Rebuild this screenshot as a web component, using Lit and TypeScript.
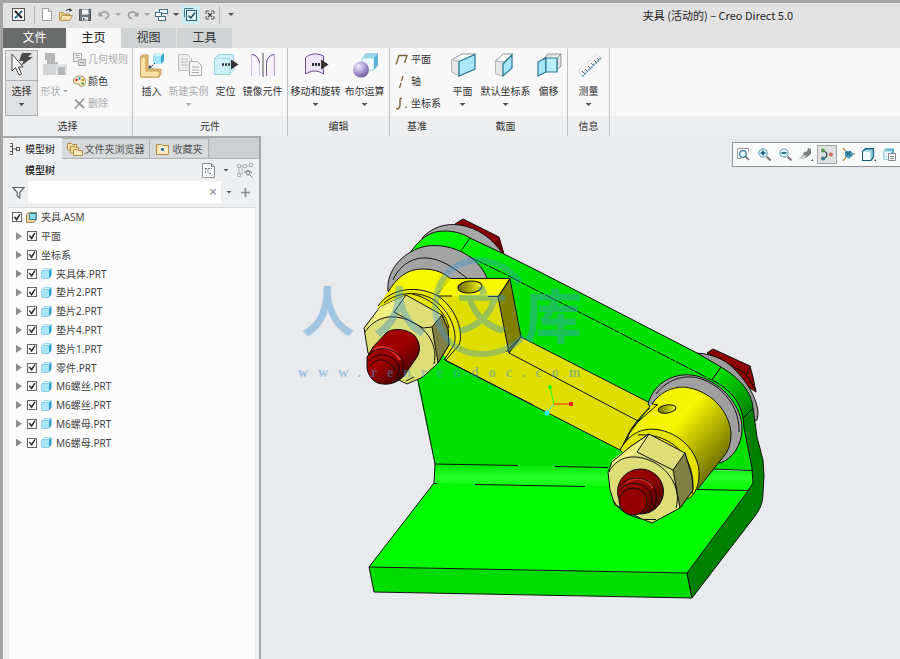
import { LitElement, html, svg, css, nothing } from "lit";
import { customElement, property } from "lit/decorators.js";

/* ---------- icons ---------- */

const icons: Record<string, [number, number, unknown]> = {
  app: [13, 13, svg`<rect x=".5" y=".5" width="12" height="12" fill="#f4f4f4" stroke="#555"/><path d="M3 3L10 10" stroke="#222" stroke-width="2"/><path d="M10 3L7.300 5.700M5.700 7.300L3 10" stroke="#2a6a86" stroke-width="1.800"/>`],
  doc: [12, 13, svg`<path d="M1.500.5h6l3 3v9h-9z" fill="#fff" stroke="#9aa0a4"/><path d="M7.500.5v3h3" fill="#dfe4e6" stroke="#9aa0a4"/>`],
  open: [14, 13, svg`<path d="M.5 12V4.500h4l1 1.500h5V12z" fill="#e8c88c" stroke="#b99653"/><path d="M.8 12.300L3 7.500h10.500l-2.700 4.800z" fill="#f8e2ae" stroke="#b99653"/><path d="M7 3c1-2 3-2 4.500-1" fill="none" stroke="#333"/><path d="M10.500 0l3 2.500-3.500 1z" fill="#333"/>`],
  save: [12, 12, svg`<path d="M.5.5h11v11h-11z" fill="#70777c" stroke="#4c5256"/><path d="M3 .5h6.500v5H3z" fill="#f2f4f5"/><path d="M3 8h6v3.500H3z" fill="#d9dcde"/><path d="M4 9h1.500v2H4z" fill="#555"/>`],
  undo: [12, 10, svg`<path d="M2 4.500C5 0 11 2 10.500 5.500 10 8 8 8 7 9" fill="none" stroke="#999da0" stroke-width="1.500"/><path d="M.5 1.500v5h5z" fill="#999da0"/>`],
  redo: [12, 10, svg`<path d="M10 4.500C7 0 1 2 1.500 5.500 2 8 4 8 5 9" fill="none" stroke="#999da0" stroke-width="1.500"/><path d="M11.500 1.500v5h-5z" fill="#999da0"/>`],
  windows: [13, 12, svg`<rect x="4.500" y=".5" width="8" height="4" fill="#f0f5f7" stroke="#3e7186"/><rect x=".5" y="3.500" width="6" height="4" fill="#fff" stroke="#3e7186"/><rect x="3.500" y="7.500" width="7" height="4" fill="#fff" stroke="#3e7186"/>`],
  regen: [13, 13, svg`<path d="M.5 9.500v-9h9" fill="none" stroke="#4d7e90"/><rect x="2.500" y="2.500" width="10" height="10" fill="#e9f8fd" stroke="#28627a"/><path d="M4.500 7.500l2.300 2.500L11 4.500" fill="none" stroke="#1f4c60" stroke-width="1.500"/>`],
  closewin: [10, 10, svg`<path d="M1 4V1h3M6 1h3v3M9 6v3H6M4 9H1V6" fill="none" stroke="#555"/><path d="M3 3l4 4M7 3L3 7" stroke="#444" stroke-width="1.200"/>`],
  select: [26, 26, svg`<path d="M13 1h10l-4 4h5L12 14l2.500-5H10z" fill="#4a4a4a"/><path d="M3 2v17l3.500-3.500L10 23l2.500-1-3-7H14z" fill="#fff" stroke="#444"/>`],
  shape: [26, 26, svg`<path d="M3 1h10v9h3v5H5V8H3z" fill="#b6b8ba"/><path d="M1 12h13v11H1z" fill="#d2d4d6"/><path d="M14 12h11v11H14z" fill="#e2e3e4"/><path d="M16 15h7v8h-7z" fill="#b6b8ba"/>`],
  rule: [13, 13, svg`<path d="M.5.5h8v8h-8zM2.500 2.500h4M2.500 4.500h4" fill="#f2f2f2" stroke="#a4a6a8"/><path d="M5.500 6.500h7v6h-7z" fill="#dcdddd" stroke="#a4a6a8"/><path d="M7 9.500h4" stroke="#999"/>`],
  color: [13, 13, svg`<path d="M6.500 1C10 1 12.500 3 12.500 6.500S10 12 7.500 11.500C6 11 7.500 9.500 6 9 4 9 .5 9.500.5 6S3.500 1 6.500 1z" fill="#f8edc6" stroke="#a08a4a"/><circle cx="3.500" cy="5" r="1.300" fill="#d33"/><circle cx="6.500" cy="3.500" r="1.200" fill="#39b"/><circle cx="9.800" cy="5" r="1.200" fill="#c80"/><circle cx="9.500" cy="8.500" r="1.200" fill="#593"/>`],
  del: [13, 13, svg`<path d="M2 2.500L11 11M11 1.500L2 11.500" stroke="#949698" stroke-width="1.800"/>`],
  insert: [26, 26, svg`<path d="M1.500 5l2-2H9v14h13v5l-2 3H1.500z" fill="#edc479" stroke="#c09a55"/><path d="M1.500 5H7v14h13v6H1.500z" fill="#fbe3a8" stroke="#c09a55"/><path d="M14 4l3-3h8v8l-3 3h-8z" fill="#3ba6d2"/><path d="M14 4h8v8h-8z" fill="#a3e3fa"/><path d="M14 4l3-3h8l-3 3z" fill="#d4f3fd"/><path d="M16 11l-4 4" stroke="#333" stroke-dasharray="2 1"/><circle cx="11" cy="15" r="1.500" fill="#345"/>`],
  newinst: [26, 26, svg`<path d="M2.500 2.500h9l4 4v12h-13z" fill="#ececec" stroke="#bcbec0"/><path d="M5 7h7M5 10h7M5 13h7" stroke="#bcbec0"/><path d="M13.500 9.500h8l4 4v10h-12z" fill="#f5f5f5" stroke="#a8aaac"/><path d="M16 15h7M16 18h7M16 20.500h7" stroke="#a8aaac"/>`],
  place: [26, 26, svg`<path d="M1.500 6.500l4-4h15v15l-4 5h-15z" fill="#cdf0fa" stroke="#9ccfde"/><path d="M1.500 6.500h15v16" fill="none" stroke="#a6dcea"/><path d="M9 12.500h9" stroke="#333" stroke-width="2.500" stroke-dasharray="2 1"/><path d="M18 7.500l7.500 5-7.500 5z" fill="#333"/>`],
  mirror: [26, 26, svg`<path d="M13 1v24" stroke="#a2a4a6" stroke-width="2"/><path d="M1.500 24V2.500C6 3 9 6 9.500 11v13" fill="#f7f4fb" stroke="#cabfd6"/><path d="M2 2.500C6 3 9 6 9.500 11" fill="none" stroke="#6e4b8e"/><path d="M24.500 24V2.500C20 3 17 6 16.500 11v13" fill="#f4eff9" stroke="#b8a8c8"/><path d="M24 2.500C20 3 17 6 16.500 11v13" fill="none" stroke="#7c5a9c"/>`],
  move: [26, 26, svg`<path d="M2.500 5.500C8 1 14 1 20.500 4v18c-6-4-12-4-18 0z" fill="#eee5f8" stroke="#6e4b96"/><path d="M9 12.500h9" stroke="#333" stroke-width="3" stroke-dasharray="2 1"/><path d="M18 7.500l7.500 5-7.500 5z" fill="#333"/>`],
  bool: [26, 26, svg`<path d="M10 6l4-5h12v12l-4 5H10z" fill="#9bd6e6"/><path d="M10 6h12v12H10z" fill="#f2fbfe" stroke="#a9dbe8"/><path d="M22 6l4-5v12l-4 5z" fill="#58b4d2"/><circle cx="9" cy="17.500" r="8" fill="url(#orb)"/>`],
  plane: [13, 13, svg`<path d="M1 11.500L4 2.500h8L9.500 10" fill="none" stroke="#7b6239" stroke-width="1.300"/>`],
  axis: [13, 13, svg`<path d="M8 1L6.500 6M6 8l-1.500 5" stroke="#7b6239" stroke-width="1.300"/>`],
  csys: [13, 13, svg`<path d="M1 12c4 0 4-2 4-5.500V1.500M5 1.500h2M11 9.500v1.500" fill="none" stroke="#7b6239" stroke-width="1.400"/>`],
  secplane: [26, 26, svg`<path d="M1.500 8L12 2h13L17 7" fill="#fff" stroke="#8f9396"/><path d="M1.500 8L9 9.500V24l-7.500-4z" fill="#e4e6e8" stroke="#b4b8ba"/><path d="M9 9.500L25 2.500V17L9 24z" fill="#aae7fc" stroke="#26768f" stroke-width="1.200"/>`],
  seccsys: [26, 26, svg`<path d="M2.500 9l8-7h9L11 10z" fill="#fff" stroke="#8f9396"/><path d="M2.500 9l7.500 1v14l-7.500-2z" fill="#e4e6e8" stroke="#b4b8ba"/><path d="M10 12l9-9v13l-9 8z" fill="#aae7fc" stroke="#26768f" stroke-width="1.200"/>`],
  offset: [26, 26, svg`<path d="M6 8l6-6h13l-4 4v12l4-4V2" fill="#dfe2e4" stroke="#8f9396"/><path d="M2 10l8-4v14l-8 4z" fill="#aae7fc" stroke="#26768f" stroke-width="1.200"/><path d="M10 6h11v14H10z" fill="#b8edfd" stroke="#26768f" stroke-width="1.200"/>`],
  measure: [26, 26, svg`<path d="M1.500 19L20 1.500l5 4.500L6.500 24.500z" fill="#f4f5f6" stroke="#d6dadc"/><path d="M6.500 24.500L25 6" stroke="#5c98ab" stroke-width="1.500" stroke-dasharray="2 1"/><path d="M6 19l3 3M9 17l2 2M12 14l3 3M15 11l2 2M18 8l3 3M21 6l2 2" stroke="#5a6266"/>`],
  tree: [12, 14, svg`<path d="M1 1.500h2.500v3H1M1 9.500h2.500v3H1M3.500 3v8M3.500 7H7" fill="none" stroke="#555"/><rect x="7.500" y="5.500" width="3" height="3" fill="none" stroke="#555"/>`],
  folders: [16, 14, svg`<path d="M.5 8V1.500h4l1 1h4V8z" fill="#f6dfa4" stroke="#b08c48"/><path d="M3.500 11V4.500h4l1 1h3V11z" fill="#f6dfa4" stroke="#b08c48"/><path d="M6.500 13.500V7.500h4l1 1h4v5z" fill="#fbe9ba" stroke="#b08c48"/>`],
  fav: [13, 12, svg`<path d="M.5 11.500v-10h5l1 1h6v9z" fill="#fbe9ba" stroke="#b08c48"/><path d="M6.500 3.500l3 3-3 3-3-3z" fill="#fff"/><circle cx="6.500" cy="6.500" r="1.700" fill="#2f6f92"/>`],
  settings: [13, 15, svg`<path d="M.5.5h9l3 3v11h-12z" fill="#fff" stroke="#8c9498"/><path d="M9.500.5v3h3" fill="none" stroke="#8c9498"/><path d="M3 5.500h7M3.500 5v6M6 5.500v5h4" fill="none" stroke="#6b8490" stroke-dasharray="2 1"/>`],
  treeshow: [16, 15, svg`<path d="M.5 1.500h3v3h-3zM.5 10.500h3v3h-3zM6.500 1.500h3v3h-3zM12.500.5h3v3h-3zM2 5v5M4 3h2M10 3h2M5 3v9" fill="none" stroke="#b0b3b5"/><circle cx="11" cy="10" r="2" fill="none" stroke="#77797b"/><path d="M13 12l2.500 2.500M7 10c2-3 6-3 8 0" fill="none" stroke="#77797b"/>`],
  filter: [13, 13, svg`<path d="M1 1.500h11L7.800 6.500v5.500l-2.600-2V6.500z" fill="#fafbfb" stroke="#5a6670" stroke-width="1.200"/>`],
  plus: [9, 9, svg`<path d="M4.500 0v9M0 4.500h9" stroke="#8b8e90" stroke-width="1.700"/>`],
  asm: [11, 11, svg`<path d="M.5 2.500l2-2h8v7l-3 3h-7z" fill="#f1d79a" stroke="#9c8c5c"/><path d="M3.500 1.500h6.500v6H3.500z" fill="#93dcf5" stroke="#2e7f9f"/>`],
  part: [11, 11, svg`<path d="M.5 3l2.500-2.500h7.500v7L8 10.500H.5z" fill="#2f9fd0"/><path d="M1 3h7v7H1z" fill="#a9e6fb"/><path d="M1 2.600L3 .8h7L8 2.600z" fill="#d8f5ff"/>`],
  fit: [13, 13, svg`<path d="M.5.5h11M.5.500v10h4M11.500.500v3" fill="none" stroke="#9a9da0"/><circle cx="6" cy="6" r="3.300" fill="#eefafd" stroke="#2b7d97" stroke-width="1.200"/><path d="M8.500 8.500l3.500 3.500" stroke="#777" stroke-width="1.700"/>`],
  zin: [13, 13, svg`<circle cx="5" cy="5" r="4.200" fill="#dff4fb" stroke="#5a9cb2"/><path d="M2.500 5h5M5 2.500v5" stroke="#155a75" stroke-width="1.700"/><path d="M8.500 8.500l4 4" stroke="#777" stroke-width="2"/>`],
  zout: [13, 13, svg`<circle cx="5" cy="5" r="4.200" fill="#dff4fb" stroke="#5a9cb2"/><path d="M2.500 5h5" stroke="#155a75" stroke-width="1.700"/><path d="M8.500 8.500l4 4" stroke="#777" stroke-width="2"/>`],
  repaint: [15, 13, svg`<path d="M9 0l3 1v5L7 10 0 11l4-4 1-3 3-.5z" fill="#7d8083"/><path d="M0 11l5-4 3 1-4 3z" fill="#cfd1d3"/><path d="M12 13h2v-2z" fill="#333"/>`],
  datum: [14, 13, svg`<path d="M4 3c4 2 4 5 0 8" fill="none" stroke="#33444c" stroke-width="1.300"/><circle cx="3" cy="2.500" r="2" fill="#5d9a4c"/><circle cx="11" cy="6.500" r="2" fill="#cf6a5a"/><circle cx="3" cy="10.500" r="2" fill="#34769a"/>`],
  spin: [13, 13, svg`<path d="M1 0l3 4v5l-3 4M3 6h10" fill="none" stroke="#b4792e" stroke-width="1.200"/><path d="M3 3l5 0 4 3-5 5-4-3z" fill="#4c9fc0"/><path d="M4 4l6 4M4 8l5-5" stroke="#17546c"/>`],
  shade: [15, 13, svg`<path d="M.6 3.500L3.500.6h8v8.500L9 12.400H.6z" fill="#8cc8da" stroke="#155a75" stroke-width="1.200"/><path d="M1 3.500h7.500v8.500H1z" fill="#f6fdff"/><path d="M12 13h2v-2z" fill="#333"/>`],
  views: [14, 13, svg`<path d="M.5 3L3 .5h8v9L9 11.500H.5z" fill="#58b3d2"/><path d="M1 3h7.500v8.500H1z" fill="#e4f7fd" stroke="#98cfe0"/><path d="M5.500 5.500h7v7h-7z" fill="#fff" stroke="#888"/><path d="M7 8.500h4M7 10.500h4" stroke="#777"/>`],
};

const icon = (name: string) => {
  const [w, h, body] = icons[name];
  return html`<svg width=${w} height=${h} viewBox="0 0 ${w} ${h}" aria-hidden="true">${
    name === "bool"
      ? svg`<defs><radialGradient id="orb" cx=".35" cy=".3" r=".8"><stop offset="0" stop-color="#f3effb"/><stop offset=".6" stop-color="#9d8cc8"/><stop offset="1" stop-color="#5d4a92"/></radialGradient></defs>`
      : nothing
  }${body}</svg>`;
};

const base = css`
  * { box-sizing: border-box; }
  button {
    border: 0;
    padding: 0;
    margin: 0;
    background: none;
    color: inherit;
    font: inherit;
    line-height: inherit;
    white-space: nowrap;
  }
  svg { display: block; flex: none; }
  .arrow {
    flex: none;
    width: 6px;
    height: 3px;
    background: #505254;
    clip-path: polygon(0 0, 100% 0, 50% 100%);
  }
`;

/* ---------- ribbon ---------- */

interface Tool { icon: string; label: string; menu?: boolean; off?: boolean; size?: string; active?: boolean; }
interface Group { label: string; cls: string; large: Tool[]; small?: Tool[]; }

const groups: Group[] = [
  {
    label: "选择", cls: "first",
    large: [
      { icon: "select", label: "选择", menu: true, active: true, size: "narrow" },
      { icon: "shape", label: "形状", off: true, size: "inline" },
    ],
    small: [
      { icon: "rule", label: "几何规则", off: true },
      { icon: "color", label: "颜色" },
      { icon: "del", label: "删除", off: true },
    ],
  },
  {
    label: "元件", cls: "parts",
    large: [
      { icon: "insert", label: "插入" },
      { icon: "newinst", label: "新建实例", menu: true, off: true },
      { icon: "place", label: "定位" },
      { icon: "mirror", label: "镜像元件" },
    ],
  },
  {
    label: "编辑", cls: "edit",
    large: [
      { icon: "move", label: "移动和旋转", menu: true, size: "wide" },
      { icon: "bool", label: "布尔运算", menu: true, size: "wide" },
    ],
  },
  {
    label: "基准", cls: "open", large: [],
    small: [
      { icon: "plane", label: "平面" },
      { icon: "axis", label: "轴" },
      { icon: "csys", label: "坐标系" },
    ],
  },
  {
    label: "截面", cls: "",
    large: [
      { icon: "secplane", label: "平面", menu: true },
      { icon: "seccsys", label: "默认坐标系", menu: true, size: "wide" },
      { icon: "offset", label: "偏移" },
    ],
  },
  { label: "信息", cls: "", large: [{ icon: "measure", label: "测量", menu: true, size: "info" }] },
];

@customElement("cad-ribbon")
class CadRibbon extends LitElement {
  static styles = [base, css`
    :host { display: block; }
    .quick { display: flex; align-items: center; height: 25px; padding-bottom: 2px; }
    .quick button { display: flex; align-items: center; justify-content: center; width: 19px; height: 19px; }
    .quick .logo { width: 31px; }
    .quick .drop { width: 10px; }
    .quick .last { width: 18px; }
    .quick .on { background: #cdeaf5; }
    .quick .faint .arrow { background: #a4a6a8; }
    .sep { width: 1px; height: 18px; background: #b4b6b8; margin-right: 2px; }
    h1 {
      margin: 0;
      flex: 1;
      text-align: center;
      font: 400 11px/14px "Noto Sans CJK SC", sans-serif;
      color: #222;
      padding-left: 296px;
      white-space: nowrap;
    }
    .tabs { display: flex; height: 20px; font-size: 12px; line-height: 20px; }
    .tabs button { width: 55px; background: #d0d3d4; color: #333; margin-right: 1px; }
    .tabs .file { width: 63px; background: #6a6b6b; color: #fff; margin: 0; }
    .tabs .home { background: #f8f8f8; color: #111; margin: 0; }
    .ribbon { display: flex; background: linear-gradient(#f8f8f8 68px, #eeeff0 68px); height: 88px; }
    .group { display: flex; flex-direction: column; border-right: 1px solid #bfc1c3; }
    .group.open { border-right: 0; }
    .tools { display: flex; height: 68px; }
    .first .tools { padding-left: 2px; }
    .parts .tools { padding-right: 6px; }
    .edit .tools { padding-left: 3px; }
    .caption { height: 20px; line-height: 20px; text-align: center; color: #333; }
    .large {
      display: flex;
      flex-direction: column;
      align-items: center;
      width: 37px;
      height: 66px;
      margin-top: 2px;
      padding-top: 2px;
      color: #333;
    }
    .large span { height: 22px; line-height: 20px; margin-top: 3px; padding-bottom: 2px; display: flex; align-items: center; gap: 2px; }
    .narrow { width: 33px; }
    .inline { width: 33px; }
    .wide { width: 49px; }
    .info { width: 41px; }
    .active { background: linear-gradient(#e2e4e5 30px, #aeb0b2 30px, #aeb0b2 31px, #dfe1e2 31px); outline: 1px solid #aeb0b2; outline-offset: -1px; }
    .small { display: flex; flex-direction: column; padding: 0 4px 0 2px; color: #333; }
    .small button { display: flex; align-items: center; height: 22px; gap: 2px; width: 55px; }
    .open .small { padding: 0 2px 0 5px; }
    .open .small button { width: 47px; gap: 3px; }
    .off { color: #a8aaac; }
    .off .arrow { background: #a8aaac; }
  `];

  private tool(t: Tool) {
    return html`<button class="large ${t.size ?? ""} ${t.off ? "off" : ""} ${t.active ? "active" : ""}">
      ${icon(t.icon)}
      <span>${t.label}${t.size === "inline" ? html`<i class="arrow"></i>` : nothing}</span>
      ${t.menu ? html`<i class="arrow"></i>` : nothing}
    </button>`;
  }

  render() {
    const q = (name: string, label: string, cls = "") =>
      html`<button class=${cls} aria-label=${label}>${icon(name)}</button>`;
    const drop = (label: string, cls = "") =>
      html`<button class="drop ${cls}" aria-label=${label}><i class="arrow"></i></button>`;
    return html`
      <div class="quick">
        ${q("app", "窗口", "logo")}<div class="sep"></div>
        ${q("doc", "新建")}${q("open", "打开")}${q("save", "保存")}
        ${q("undo", "撤消")}${drop("撤消列表", "faint")}
        ${q("redo", "重做")}${drop("重做列表", "faint")}
        ${q("windows", "窗口切换")}${drop("窗口列表")}
        ${q("regen", "重新生成", "on")}${q("closewin", "关闭")}
        <div class="sep"></div>${drop("自定义", "last")}
        <h1>夹具 (活动的) – Creo Direct 5.0</h1>
      </div>
      <nav class="tabs">
        <button class="file">文件</button><button class="home">主页</button>
        <button>视图</button><button>工具</button>
      </nav>
      <div class="ribbon">
        ${groups.map((g) => html`<section class="group ${g.cls}">
          <div class="tools">
            ${g.large.map((t) => this.tool(t))}
            ${g.small
              ? html`<div class="small">${g.small.map((t) =>
                  html`<button class=${t.off ? "off" : ""}>${icon(t.icon)}${t.label}</button>`)}</div>`
              : nothing}
          </div>
          <div class="caption">${g.label}</div>
        </section>`)}
      </div>`;
  }
}

/* ---------- model tree ---------- */

const nodes: { label: string; icon?: string }[] = [
  { label: "平面" }, { label: "坐标系" },
  ...["夹具体.PRT", "垫片2.PRT", "垫片2.PRT", "垫片4.PRT", "垫片1.PRT", "零件.PRT",
    "M6螺丝.PRT", "M6螺丝.PRT", "M6螺母.PRT", "M6螺母.PRT"].map((label) => ({ label, icon: "part" })),
];

@customElement("model-tree")
class ModelTree extends LitElement {
  static styles = [base, css`
    :host { display: flex; flex-direction: column; background: #edeff1; border-right: 2px solid #a6a8aa; border-top: 2px solid #a6a8aa; }
    .tabs { display: flex; height: 21px; background: #cccfd1; border-bottom: 1px solid #b4b7b9; }
    .tabs button {
      display: flex; align-items: center; justify-content: center; gap: 4px;
      height: 21px; width: 59px; background: #d6d9da; border: 1px solid #b0b3b5; border-left: 0; color: #555;
    }
    .tabs .on { background: #edeff1; border-color: #edeff1; color: #222; }
    .tabs .long { width: 88px; gap: 2px; }
    .head { display: flex; align-items: center; height: 22px; padding: 0 6px 0 22px; }
    .head h2 { margin: 0; font-size: inherit; font-weight: 500; color: #222; flex: 1; }
    .head .drop { width: 22px; height: 14px; display: grid; place-items: center; }
    .search { display: flex; align-items: center; height: 22px; padding-left: 9px; }
    .box { display: flex; flex: 1; height: 22px; margin-left: 3px; background: #fff; align-items: center; padding-right: 3px; }
    input[type="text"] { flex: 1; min-width: 0; height: 22px; border: 0; outline: 0; background: none; font: inherit; }
    .clear { width: 10px; color: #888; font-size: 14px; line-height: 12px; }
    .search .drop { width: 16px; height: 14px; display: grid; place-items: center; }
    .search .add { width: 17px; height: 14px; display: grid; place-items: center; margin-right: 5px; }
    .list {
      flex: 1; margin: 4px 4px 0 6px; background: #fcfcfd; border-top: 1px solid #d4d8da;
    }
    ul { list-style: none; margin: 0; padding: 0; display: grid; grid-auto-rows: 1fr; height: 244px; }
    li { display: flex; align-items: center; padding-left: 7px; color: #444; }
    li.root { padding-left: 3px; }
    .twist { width: 6px; height: 8px; background: #8a8c8e; clip-path: polygon(0 0, 100% 50%, 0 100%); margin-right: 5px; }
    label { display: flex; align-items: center; gap: 4px; white-space: nowrap; }
    input[type="checkbox"] {
      appearance: none; margin: 0; width: 10px; height: 10px; border: 1px solid #666; background: #fff; display: grid; place-items: center;
    }
    input[type="checkbox"]:checked::before {
      content: ""; width: 8px; height: 8px; background: #222;
      clip-path: polygon(8% 45%, 25% 38%, 42% 62%, 80% 8%, 96% 12%, 46% 94%);
    }
  `];

  render() {
    return html`
      <nav class="tabs">
        <button class="on">${icon("tree")}模型树</button>
        <button class="long">${icon("folders")}文件夹浏览器</button>
        <button>${icon("fav")}收藏夹</button>
      </nav>
      <div class="head">
        <h2>模型树</h2>
        <button aria-label="设置">${icon("settings")}</button>
        <button class="drop" aria-label="设置菜单"><i class="arrow"></i></button>
        <button aria-label="显示">${icon("treeshow")}</button>
      </div>
      <div class="search">
        ${icon("filter")}
        <div class="box"><input type="text" aria-label="搜索模型树" /><button class="clear" aria-label="清除">×</button></div>
        <button class="drop" aria-label="搜索选项"><i class="arrow"></i></button>
        <button class="add" aria-label="添加">${icon("plus")}</button>
      </div>
      <div class="list">
        <ul>
          <li class="root"><label><input type="checkbox" .checked=${true} />${icon("asm")}夹具.ASM</label></li>
          ${nodes.map((n) => html`<li>
            <button class="twist" aria-label="展开"></button>
            <label><input type="checkbox" .checked=${true} />${n.icon ? icon(n.icon) : nothing}${n.label}</label>
          </li>`)}
        </ul>
      </div>`;
  }
}

/* ---------- 3D view ---------- */

@customElement("model-view")
class ModelView extends LitElement {
  @property() active = "datum";

  static styles = [base, css`
    :host { display: block; position: relative; background: #e9eaee; overflow: hidden; }
    .scene { width: 100%; height: 100%; }
    .bar {
      position: absolute; top: 6px; right: -1px; display: flex; align-items: center;
      height: 25px; background: #fafbfb; border: 1px solid #8e9294;
    }
    .bar button { display: grid; place-items: center; width: 20px; height: 19px; }
    .bar button + button { margin-left: 1px; }
    .bar .on { background: #dfe1e3; outline: 1px solid #a2a5a8; outline-offset: -1px; }
    .ink { fill: none; stroke: #111; }
    .edge { stroke: #111; }
    .mark { fill: #3f97d2; opacity: 0.42; font-family: "Noto Sans CJK SC", sans-serif; font-weight: 700; }
    .ring { fill: none; stroke: #3f97d2; stroke-width: 6; opacity: 0.38; }
    .url { fill: #3f97d2; opacity: 0.45; font-family: "Liberation Serif", serif; font-weight: 700; font-size: 14px; letter-spacing: 10px; }
  `];

  private scene() {
    return html`<svg class="scene" viewBox="261 136 639 523" role="img" aria-label="夹具三维模型">
      <defs>
        <linearGradient id="cyl" gradientUnits="userSpaceOnUse" x1="655" y1="400" x2="722" y2="460">
          <stop offset="0" stop-color="#f0f000"/><stop offset=".35" stop-color="#f8f800"/><stop offset=".68" stop-color="#b4b400"/><stop offset="1" stop-color="#747400"/>
        </linearGradient>
        <linearGradient id="cyl2" gradientUnits="userSpaceOnUse" x1="395" y1="280" x2="450" y2="300">
          <stop offset="0" stop-color="#f8f800"/><stop offset=".65" stop-color="#f8f800"/><stop offset="1" stop-color="#c4c400"/>
        </linearGradient>
        <linearGradient id="stub" gradientUnits="userSpaceOnUse" x1="380" y1="335" x2="412" y2="372">
          <stop offset="0" stop-color="#a00000"/><stop offset=".45" stop-color="#a00000"/><stop offset="1" stop-color="#480000"/>
        </linearGradient>
        <linearGradient id="stub2" gradientUnits="userSpaceOnUse" x1="625" y1="475" x2="662" y2="502">
          <stop offset="0" stop-color="#a00000"/><stop offset=".5" stop-color="#900000"/><stop offset="1" stop-color="#580000"/>
        </linearGradient>
        <linearGradient id="boss" gradientUnits="userSpaceOnUse" x1="714" y1="370" x2="750" y2="408">
          <stop offset="0" stop-color="#00e400"/><stop offset="1" stop-color="#008a00"/>
        </linearGradient>
        <linearGradient id="fillet" x1="0" y1="0" x2="0" y2="1">
          <stop offset="0" stop-color="#00e400"/><stop offset=".5" stop-color="#28ff28"/><stop offset="1" stop-color="#00fa00"/>
        </linearGradient>
        <linearGradient id="hole" x1="0" y1="0" x2="1" y2="0">
          <stop offset="0" stop-color="#6c6c00"/><stop offset="1" stop-color="#f4f400"/>
        </linearGradient>
        <linearGradient id="bosstop" gradientUnits="userSpaceOnUse" x1="420" y1="240" x2="520" y2="290">
          <stop offset="0" stop-color="#00ff00"/><stop offset="1" stop-color="#00e000"/>
        </linearGradient>
      </defs>

      <!-- rear bolt heads and washers -->
      <path class="edge" fill="#8c0000" d="M455 224L463 219 499 237 504 254 490 250z"/>
      <path fill="#640000" d="M494 244L499 237 504 254z"/>
      <path class="edge" fill="#a6a6a6" d="M422 238C432 227 446 223 460 225C478 228 492 238 502 253L480 262 430 262z"/>
      <path class="edge" fill="#8c0000" d="M707 353L713 349 750 366 753 377 756 392 745 385z"/>
      <path class="ink" d="M747 374L750 366M707 353L745 373 756 390"/>
      <path class="edge" fill="#9c9c9c" d="M696 353C715 354 728 361 738 373C750 386 758 402 758 414L757 420 742 424 720 370z"/>

      <!-- bracket -->
      <path fill="#00e000" d="M410 253C420 240 428 234 440 231C452 231 462 233 470 238L504 254 540 272 697 353 721 367C741 379 752 395 753 408L743 418 753 470 435 465 417 380z"/>
      <path fill="url(#bosstop)" d="M407 257C417 242 428 233 442 231C452 231 462 233 470 238L540 272 697 353 721 367 712 380 530 288 461 252 440 262z"/>
      <path class="ink" d="M410 253C420 238 430 231 444 231C454 231 462 233 470 238L504 254 540 272 697 353 721 367"/>
      <path class="ink" d="M470 238L461 251M470 257L503 273 530 287 712 380L721 367" stroke-dasharray="14 1 5 1"/>
      <path class="edge" fill="url(#boss)" d="M721 367C741 379 752 393 753 408L743 418C740 400 728 388 712 380z"/>
      <path fill="url(#fillet)" d="M435 464L752 471 753 483 748 491 434 484z"/>
      <path fill="#00fa00" d="M434 483L748 490.500 687 573 369 567z"/>
      <path class="edge" fill="#00dc00" d="M369 567L687 573 692 598 374 592z"/>
      <path class="edge" fill="#008000" d="M743 418L753 408 757 437 763 460 764 476 763 493C763 503 760 509 755 516L692 598 687 573 748 491 753 483 752 468 744 428z"/>
      <path class="ink" d="M418 380L435 464 434 483 369 567M435 464L518 465.500M555 466.500L608 467.500M712 469L752 470.500M434 483.500h3M475 484.500L585 486.500M697 489.500L748 490.500"/>

      <!-- left washer and sleeve -->
      <path class="edge" fill="#a4a4a4" d="M388 291C386 270 404 250 427 246C452 243 478 256 487 278L450 300 400 305z"/>
      <path class="ink" d="M393 280C400 264 414 257 427 258C442 259 454 268 468 279"/>
      <path fill="url(#cyl2)" d="M388 292C396 279 406 269 422 269C436 269 444 273 451 279L460 300 455 345 378 330 378 306z"/>
      <path class="ink" d="M388 292C396 279 406 269 422 269C436 269 444 273 451 279M451 279L435 297"/>

      <!-- arm -->
      <path class="edge" fill="#dede00" d="M521 337L652 404 638 421 620 450 445 360 500 320z"/>
      <path fill="#dede00" d="M436 296L498 297 509 353 505 389 445 359 460 335z"/>
      <path fill="#f8f800" d="M451 278L510 279 498 297 436 296z"/>
      <path class="edge" fill="#808000" d="M510 279L521 337 509 353 498 297z"/>
      <path class="ink" d="M451 278.500H510L498 297M436 296h16M488 296.500h10M509 353L530 364 638 421M521 337L506 352M445 360L533 405"/>
      <ellipse class="edge" cx="470" cy="287" rx="12" ry="6" fill="url(#hole)" transform="rotate(-5 470 287)"/>

      <!-- left nut -->
      <path fill="#e6e600" d="M378 306C392 286 420 286 438 296C456 308 464 332 459 345L448 360 430 340z"/>
      <path class="ink" d="M378 306C392 286 420 286 438 296C456 308 464 332 459 345L446 360M384 303C398 291 420 291 434 300C450 311 458 332 454 345L444 360M412 294C430 298 445 310 449 328"/>
      <path class="edge" fill="#dede78" d="M406 295L442 315 448 329 449 345 438 363 423 377 407 384 395 378 368 353 364 328 380 307z"/>
      <path fill="#f2f284" d="M406 295L394 312 368 327 380 307z"/>
      <path class="edge" fill="#808044" d="M432 327L442 315 448 329 449 345 438 363z"/>
      <path class="ink" d="M406 295L394 312 423 328 432 327M365 332C376 316 392 314 408 320C428 328 438 346 434 364M406 381L414 377"/>
      <path class="edge" fill="url(#stub)" d="M373 347L387 332C396 327 408 330 414 335C420 341 421 351 417 357L408 370C402 382 390 385 383 384C374 384 368 376 367 368V357z"/>
      <path d="M374 350C382 344 396 350 400 360" fill="none" stroke="#d83030" stroke-width="3"/>
      <path class="ink" d="M368 356C378 343 398 349 403 362C405 370 400 378 396 382M369 361C378 350 394 355 399 366C400 374 396 380 392 383M370 366C376 356 390 359 395 370"/>

      <!-- right sleeve -->
      <path class="edge" fill="#a0a0a0" d="M648 404C654 382 676 371 697 376C724 383 742 408 742 428C742 446 732 459 720 463L690 450 660 420z"/>
      <path class="ink" d="M656 394C668 378 688 373 704 380C728 390 740 412 739 432"/>
      <path fill="url(#cyl)" d="M628 436L653 403C662 390 672 386 686 387C710 390 729 410 731 433C731 443 729 450 724 456L697 490 660 470z"/>
      <path class="ink" d="M652 404C660 392 672 387 684 387C710 390 729 410 731 433C731 443 729 450 724 456L697 490M652 404L658 405M657 405L640 420C630 428 627 438 626 444M650 408C640 416 628 430 622 448"/>
      <ellipse class="edge" cx="667" cy="409" rx="9" ry="4" fill="url(#hole)" transform="rotate(-8 667 409)"/>
      <path class="edge" fill="#e4e400" d="M620 450C630 432 644 427 660 430C684 435 700 456 699 475C699 484 696 494 688 499L650 480z"/>
      <path class="ink" d="M638 435C660 433 680 445 688 462C693 474 694 484 692 494"/>

      <!-- right nut -->
      <path class="edge" fill="#dede78" d="M649 434L685 453 692 477 693 490 680 508 652 523 642 519 615 505 610 490 608 472 612 462 630 447z"/>
      <path fill="#f2f284" d="M649 434L637 452 612 465 612 460 630 447z"/>
      <path class="edge" fill="#808044" d="M673 470L685 453 692 477 693 490 680 508z"/>
      <path class="ink" d="M649 434L637 452 663 465 673 470M649 434L630 447 612 462M609 472C616 458 630 454 646 459C668 466 682 488 676 508M613 500C620 512 630 516 642 519M644 519.500h12"/>
      <ellipse class="edge" cx="640.500" cy="491.500" rx="23" ry="22.500" fill="url(#stub2)"/>
      <path d="M626 483C634 476 648 478 653 488" fill="none" stroke="#c82020" stroke-width="3"/>
      <path class="ink" d="M620 486C630 474 648 476 655 489C659 501 654 510 648 513M619 491C628 479 644 482 651 493C654 503 649 511 643 514"/>
      <ellipse class="edge" cx="633" cy="501.500" rx="14" ry="13.500" fill="#940000"/>

      <!-- orientation triad -->
      <path d="M550 387L554 404" stroke="#20ff20"/><path d="M554 404h17" stroke="#ff2020"/><path d="M554 404l-7 9" stroke="#20f0ff"/>
      <circle cx="550" cy="387" r="2" fill="#20ff20"/><rect x="569" y="402" width="4" height="4" fill="#ff2020"/><circle cx="547" cy="413" r="2.500" fill="#20f0ff"/>

      <!-- watermark -->
      <g class="mark">
        <text x="301" y="332" font-size="54">人</text>
        <text x="373" y="332" font-size="54">人</text>
        <text x="457" y="329" font-size="50">文</text>
        <text x="524" y="338" font-size="58">库</text>
      </g>
      <path class="ring" d="M520 283C500 252 452 252 439 287C426 326 452 354 480 354C500 354 516 346 523 336"/>
      <text class="url" x="298" y="377">www.renrendoc.com</text>
    </svg>`;
  }

  render() {
    const tools: [string, string][] = [
      ["fit", "重新调整"], ["zin", "放大"], ["zout", "缩小"], ["repaint", "重画"],
      ["datum", "基准显示"], ["spin", "旋转中心"], ["shade", "显示样式"], ["views", "视图"],
    ];
    return html`${this.scene()}
      <div class="bar">${tools.map(([name, label]) =>
        html`<button class=${name === this.active ? "on" : ""} aria-label=${label}>${icon(name)}</button>`)}</div>`;
  }
}

/* ---------- shell ---------- */

@customElement("app-root")
class AppRoot extends LitElement {
  static styles = css`
    :host {
      display: flex;
      flex-direction: column;
      box-sizing: border-box;
      min-height: 100vh;
      border: solid #a4a4a4;
      border-width: 3px 0 0 3px;
      background: #e2e2e2;
      font: 10px/12px "Noto Sans", "Noto Sans CJK SC", sans-serif;
      overflow: hidden;
    }
    .body { flex: 1; display: grid; grid-template-columns: 258px 1fr; }
  `;

  render() {
    return html`<cad-ribbon></cad-ribbon>
      <main class="body"><model-tree></model-tree><model-view></model-view></main>`;
  }
}
